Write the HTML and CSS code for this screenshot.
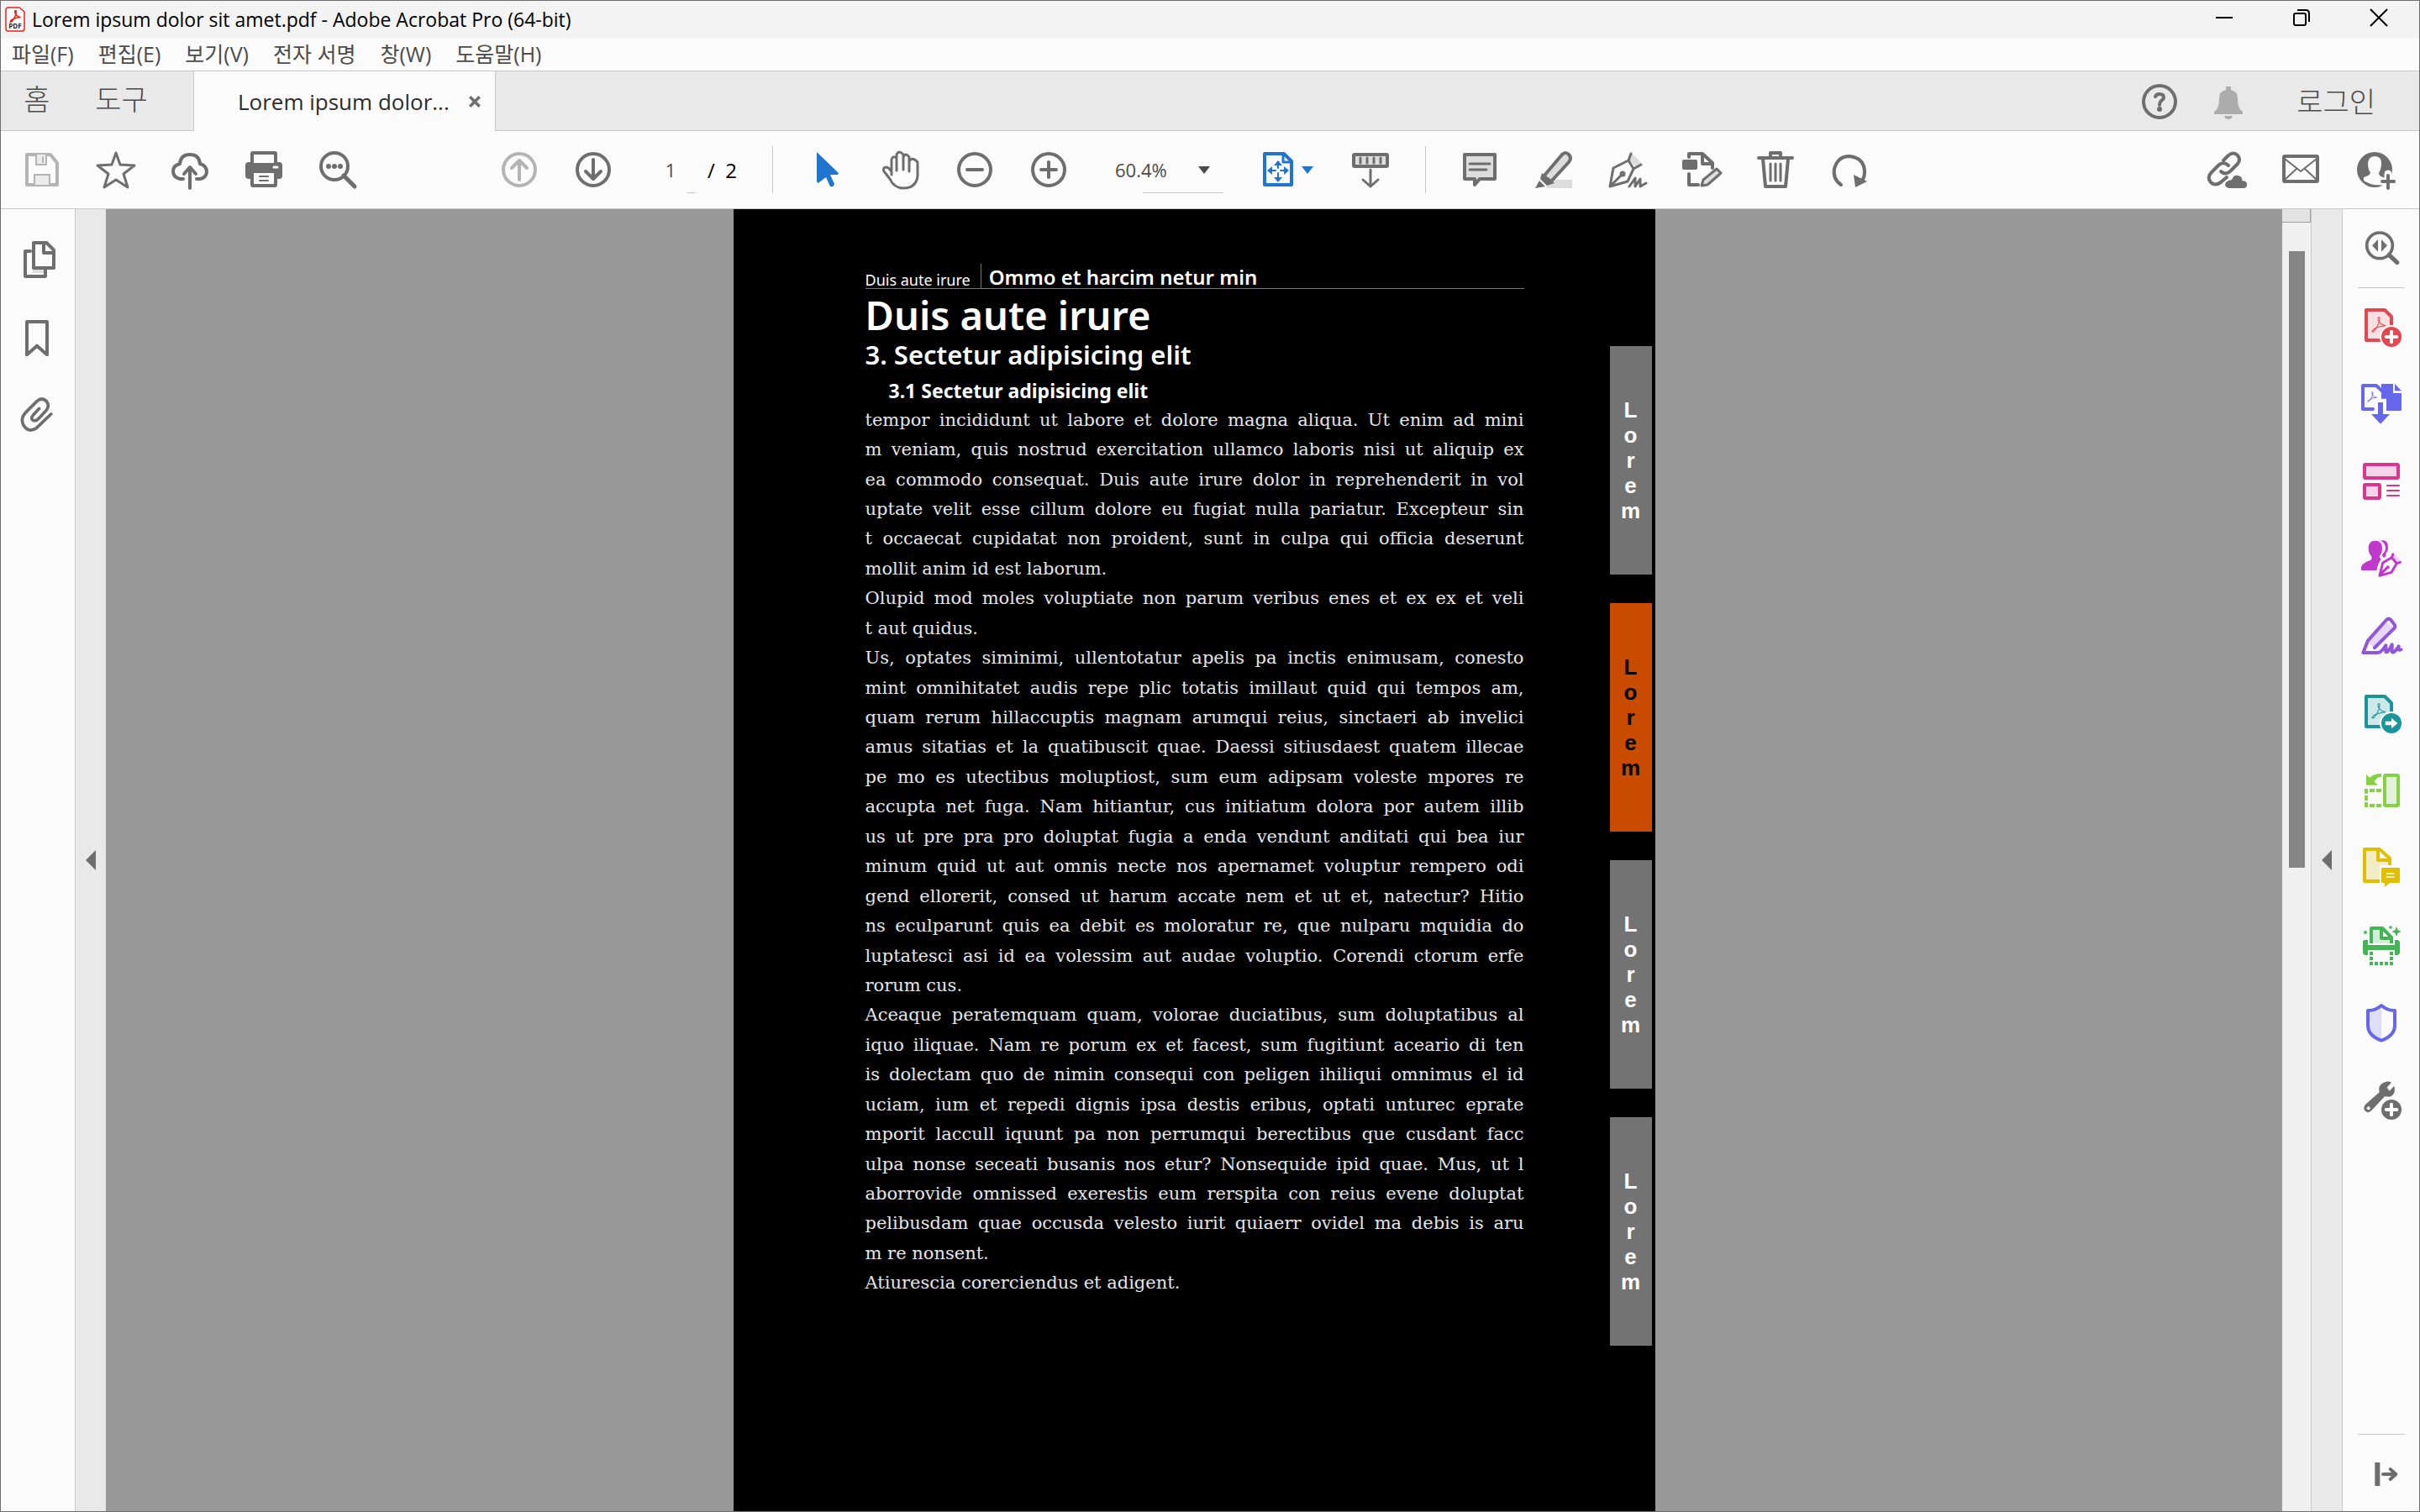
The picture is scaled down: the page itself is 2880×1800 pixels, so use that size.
FILE: index.html
```html
<!DOCTYPE html>
<html lang="ko">
<head>
    <meta charset="UTF-8">
    <meta name="viewport" content="width=device-width, initial-scale=1.0">
    <title>Lorem ipsum dolor sit amet.pdf - Adobe Acrobat Pro (64-bit)</title>
    <link rel="stylesheet" href="styles.css">
</head>
<body>
    <!-- shared shapes -->
    <svg class="defs" aria-hidden="true">
        <symbol id="acrobat" viewBox="0 0 52 56">
            <path d="M3 51C5 42 28 33 49 32C34 31 22 16 23 6C24 1 29 1 29 7C29 23 17 44 9 51C5 54 2 54 3 51Z"/>
        </symbol>
    </svg>

    <header class="titlebar">
        <svg class="app-icon" viewBox="0 0 24 30">
            <path d="M3 1H17L23 6V26Q23 29 20 29H4Q1 29 1 26V4Q1 1 4 1Z" fill="#fff" stroke="#e8231a" stroke-width="1.5"/>
            <svg x="5" y="4" width="15" height="15" fill="none" stroke="#e8231a" stroke-width="6"><use href="#acrobat"/></svg>
            <text x="12" y="26" text-anchor="middle">PDF</text>
        </svg>
        <h1 class="window-title">Lorem ipsum dolor sit amet.pdf - Adobe Acrobat Pro (64-bit)</h1>
        <div class="window-controls">
            <button aria-label="최소화"><svg viewBox="0 0 20 20"><path d="M0 10H20"/></svg></button>
            <button aria-label="이전 크기로"><svg viewBox="0 0 20 20"><rect x="1" y="5" width="14" height="14" rx="2"/><path d="M5 1H15Q19 1 19 5V15"/></svg></button>
            <button aria-label="닫기"><svg viewBox="0 0 20 20"><path d="M0 0L20 20M20 0L0 20"/></svg></button>
        </div>
    </header>

    <nav class="menubar">
        <button>파일(F)</button>
        <button>편집(E)</button>
        <button>보기(V)</button>
        <button>전자 서명</button>
        <button>창(W)</button>
        <button>도움말(H)</button>
    </nav>

    <div class="tabbar">
        <button class="home-tab">홈</button>
        <button class="tools-tab">도구</button>
        <div class="doc-tab">
            <span>Lorem ipsum dolor...</span>
            <button aria-label="탭 닫기"><svg viewBox="0 0 14 14"><path d="M2 2L12 12M12 2L2 12"/></svg></button>
        </div>
        <div class="account">
            <button aria-label="도움말"><svg class="icon" viewBox="0 0 48 48"><circle cx="24" cy="24" r="19"/><path d="M19 18Q20 15 24 15Q29 15 29 19Q29 21 26 23Q24 25 24 28"/><circle class="fill" cx="24" cy="33" r="3"/></svg></button>
            <button aria-label="알림"><svg class="icon bell" viewBox="0 0 48 48"><path class="fill" d="M21 6H27V10Q35 12 35 20Q35 33 41 36V39H7V36Q13 33 13 20Q13 12 21 10ZM19 41H29Q28 45 24 45Q20 45 19 41Z"/></svg></button>
            <button class="login">로그인</button>
        </div>
    </div>

    <div class="toolbar">
        <div class="tool-group">
            <button aria-label="저장" disabled><svg class="icon" viewBox="0 0 48 48"><path d="M6 6H34L42 16V42H6Z"/><path d="M17 6V18H29V6M15 42V30H33V42" fill="#ececec" stroke-width="2"/><path d="M25 9V15" stroke-width="2"/></svg></button>
            <button aria-label="즐겨찾기"><svg class="icon" viewBox="0 0 48 48"><path d="M24 4L29 18L46 19L33 29L38 45L24 36L10 45L15 29L2 19L19 18Z" stroke-width="3"/></svg></button>
            <button aria-label="클라우드에 업로드"><svg class="icon" viewBox="0 0 48 48"><path d="M16 35H12Q4 33 4 26Q4 19 12 17Q13 6 24 6Q35 6 36 17Q44 19 44 27Q43 34 36 35H32M24 46V22M17 29L24 21L31 29"/></svg></button>
            <button aria-label="인쇄"><svg class="icon" viewBox="0 0 48 48"><rect class="fill" x="2" y="15" width="44" height="20" rx="4"/><rect x="10" y="4" width="28" height="14" rx="1" fill="#fbfbfb"/><rect x="10" y="26" width="28" height="17" rx="1" fill="#fbfbfb"/><path d="M19 32H29M19 37H29" stroke-width="2"/><path d="M36 21H40" stroke="#fbfbfb" stroke-width="3"/></svg></button>
            <button aria-label="찾기"><svg class="icon" viewBox="0 0 48 48"><circle cx="20" cy="20" r="16"/><path d="M31 31L44 44" stroke-width="5"/><circle class="fill" cx="13" cy="20" r="3"/><circle class="fill" cx="20" cy="20" r="3"/><circle class="fill" cx="27" cy="20" r="3"/></svg></button>
        </div>
        <div class="tool-group page-group">
            <button aria-label="이전 페이지" disabled><svg class="icon" viewBox="0 0 48 48"><circle cx="24" cy="24" r="19"/><path d="M24 36V14M15 22L24 13L33 22"/></svg></button>
            <button aria-label="다음 페이지"><svg class="icon" viewBox="0 0 48 48"><circle cx="24" cy="24" r="19"/><path d="M24 12V34M15 26L24 35L33 26"/></svg></button>
            <label class="page-number"><input type="text" value="1" aria-label="페이지"><span>/&nbsp; 2</span></label>
        </div>
        <div class="tool-group view-group">
            <button aria-label="선택"><svg class="icon blue" viewBox="0 0 48 48"><path class="fill" d="M12 3L38 28L37 30H28L33 41Q32 45 28 44L23 33L15 39Q12 41 12 37Z"/></svg></button>
            <button aria-label="손 도구"><svg class="icon" viewBox="0 0 48 48"><path d="M13 30V12Q14 7 19 10V25V6Q22 0 27 6V24V9Q30 3 34 9V26V14Q38 8 44 15V32Q42 46 27 46Q16 46 11 35L4 26Q2 21 7 21Q11 22 13 27" stroke-width="3"/></svg></button>
            <button aria-label="축소"><svg class="icon" viewBox="0 0 48 48"><circle cx="24" cy="24" r="19"/><path d="M15 24H33"/></svg></button>
            <button aria-label="확대"><svg class="icon" viewBox="0 0 48 48"><circle cx="24" cy="24" r="19"/><path d="M15 24H33M24 15V33"/></svg></button>
        </div>
        <label class="zoom-level">
            <select aria-label="확대/축소"><option>60.4%</option></select>
            <svg class="caret" viewBox="0 0 14 9"><path d="M0 0H14L7 9Z"/></svg>
        </label>
        <button class="fit-page" aria-label="페이지 맞춤">
            <svg class="icon blue" viewBox="0 0 48 48"><path d="M8 5H31L40 14V42H8Z"/><path d="M30 5V15H40" stroke-width="3"/><path d="M24 15V22M24 28V36M13 25H21M27 25H35" stroke-width="2"/><path class="fill" d="M24 13L19 19H29ZM24 39L19 33H29ZM11 25L17 20V30ZM37 25L31 20V30Z"/></svg>
            <svg class="caret blue" viewBox="0 0 14 9"><path d="M0 0H14L7 9Z"/></svg>
        </button>
        <div class="tool-group read-group">
            <button aria-label="스크롤"><svg class="icon" viewBox="0 0 48 48"><rect x="4" y="6" width="40" height="14" rx="1" fill="#ddd"/><path d="M12 10V16M20 10V16M28 10V16M36 10V16M24 24V44M15 36L24 44L33 36" stroke-width="3"/></svg></button>
        </div>
        <div class="tool-group comment-group">
            <button aria-label="주석"><svg class="icon" viewBox="0 0 48 48"><path d="M6 6H42V35H24L18 42V35H6Z" fill="#ddd"/><path d="M12 17H36M12 24H32" stroke-width="3"/></svg></button>
            <button aria-label="강조"><svg class="icon" viewBox="0 0 48 48"><path d="M15 46L22 36H46V46Z" fill="#ddd" stroke="none"/><path d="M12 32L34 6Q38 2 42 6Q46 10 42 15L21 38Z" fill="#ddd"/><path class="fill" d="M10 28L25 40L16 43L8 35ZM7 37L14 44L2 46Z"/></svg></button>
            <button aria-label="서명"><svg class="icon" viewBox="0 0 48 48"><path d="M30 5L41 17L35 22L26 12Z" fill="#ddd" stroke="none"/><path d="M28 5L25 13L7 22L3 44L24 38L31 23L25 13M31 23L40 18M4 43L17 30" stroke-width="3"/><circle cx="18" cy="29" r="2" stroke-width="3"/><path d="M26 44L33 34V44L39 35V44L46 40" stroke-width="3"/></svg></button>
            <button aria-label="편집"><svg class="icon" viewBox="0 0 48 48"><rect class="fill" x="1" y="12" width="18" height="12" rx="2"/><path d="M9 9V5H25L37 16V22M25 5V17H37M9 29V42H20"/><path d="M24 43L26 36L42 23L47 28L31 42Z" fill="#ddd" stroke-width="3"/></svg></button>
            <button aria-label="삭제"><svg class="icon" viewBox="0 0 48 48"><path d="M4 10H44M18 10V4H30V10M9 11L12 44H36L39 11"/><path d="M18 17V37M24 17V37M30 17V37" stroke-width="3"/></svg></button>
            <button aria-label="회전"><svg class="icon" viewBox="0 0 48 48"><path d="M14 42Q4 35 6 23Q10 8 24 8Q42 10 42 27Q42 33 39 37"/><path class="fill" d="M29 30L45 38L31 45Z"/></svg></button>
        </div>
        <div class="tool-group share-group">
            <button aria-label="링크 공유"><svg class="icon" viewBox="0 0 48 48"><path d="M20 13L26 7Q32 2 37 7Q41 12 37 17L28 26Q22 31 17 26M24 33L17 39Q10 44 5 39Q0 33 6 27L15 18Q21 14 26 19"/><path class="fill" d="M26 46Q20 44 23 39Q27 36 30 36Q33 28 40 32Q43 34 42 37Q49 37 48 43Q47 46 45 46Z"/></svg></button>
            <button aria-label="이메일"><svg class="icon" viewBox="0 0 48 48"><rect x="4" y="8" width="40" height="30" rx="1"/><path d="M5 11L24 26L43 11M5 36L19 23M43 36L29 23" stroke-width="2"/></svg></button>
            <button aria-label="사용자 추가"><svg class="icon" viewBox="0 0 48 48"><circle class="fill" cx="24" cy="24" r="21"/><path d="M24 8Q33 8 32 19Q31 25 29 28Q29 32 34 33L33 41Q24 45 11 37V33Q18 31 19 28Q16 23 16 18Q16 8 24 8Z" fill="#fbfbfb" stroke="none"/><path d="M40 29V47M31 38H49" stroke="#fbfbfb" stroke-width="9"/><path d="M40 31V46M33 38H47"/></svg></button>
        </div>
    </div>

    <main class="workspace">
        <aside class="left-rail">
            <button aria-label="페이지 축소판"><svg class="icon" viewBox="0 0 144 144"><path d="M57 102H102V120H57Z" fill="#ddd" stroke="none"/><path d="M48 42H30V132H102V102" stroke-width="12"/><path d="M60 12H106L132 38V102H60ZM96 12V48H132" stroke-width="12"/></svg></button>
            <button aria-label="책갈피"><svg class="icon" viewBox="0 0 144 144"><path d="M36 18H108V136L72 104L36 136Z" stroke-width="12"/></svg></button>
            <button aria-label="첨부 파일"><svg class="icon" viewBox="0 0 144 144"><path d="M80 52L58 76Q48 88 58 94Q66 98 76 90L106 58Q118 42 106 26Q90 10 72 26L30 68Q12 88 24 112Q42 140 70 122L122 72" stroke-width="11"/></svg></button>
        </aside>
        <button class="gutter left-gutter" aria-label="탐색 창"><svg viewBox="0 0 12 24"><path d="M12 0V24L0 12Z"/></svg></button>

        <div class="canvas">
            <article class="page">
                <div class="page-content">
                    <div class="running-head"><span>Duis aute irure</span><strong>Ommo et harcim netur min</strong></div>
                    <h2>Duis aute irure</h2>
                    <h3>3. Sectetur adipisicing elit</h3>
                    <h4>3.1 Sectetur adipisicing elit</h4>
                    <div class="lines">
                        <p>tempor incididunt ut labore et dolore magna aliqua. Ut enim ad mini</p>
                        <p>m veniam, quis nostrud exercitation ullamco laboris nisi ut aliquip ex</p>
                        <p>ea commodo consequat. Duis aute irure dolor in reprehenderit in vol</p>
                        <p>uptate velit esse cillum dolore eu fugiat nulla pariatur. Excepteur sin</p>
                        <p>t occaecat cupidatat non proident, sunt in culpa qui officia deserunt</p>
                        <p class="last">mollit anim id est laborum.</p>
                        <p>Olupid mod moles voluptiate non parum veribus enes et ex ex et veli</p>
                        <p class="last">t aut quidus.</p>
                        <p>Us, optates siminimi, ullentotatur apelis pa inctis enimusam, conesto</p>
                        <p>mint omnihitatet audis repe plic totatis imillaut quid qui tempos am,</p>
                        <p>quam rerum hillaccuptis magnam arumqui reius, sinctaeri ab invelici</p>
                        <p>amus sitatias et la quatibuscit quae. Daessi sitiusdaest quatem illecae</p>
                        <p>pe mo es utectibus moluptiost, sum eum adipsam voleste mpores re</p>
                        <p>accupta net fuga. Nam hitiantur, cus initiatum dolora por autem illib</p>
                        <p>us ut pre pra pro doluptat fugia a enda vendunt anditati qui bea iur</p>
                        <p>minum quid ut aut omnis necte nos apernamet voluptur rempero odi</p>
                        <p>gend ellorerit, consed ut harum accate nem et ut et, natectur? Hitio</p>
                        <p>ns eculparunt quis ea debit es moloratur re, que nulparu mquidia do</p>
                        <p>luptatesci asi id ea volessim aut audae voluptio. Corendi ctorum erfe</p>
                        <p class="last">rorum cus.</p>
                        <p>Aceaque peratemquam quam, volorae duciatibus, sum doluptatibus al</p>
                        <p>iquo iliquae. Nam re porum ex et facest, sum fugitiunt aceario di ten</p>
                        <p>is dolectam quo de nimin consequi con peligen ihiliqui omnimus el id</p>
                        <p>uciam, ium et repedi dignis ipsa destis eribus, optati unturec eprate</p>
                        <p>mporit laccull iquunt pa non perrumqui berectibus que cusdant facc</p>
                        <p>ulpa nonse seceati busanis nos etur? Nonsequide ipid quae. Mus, ut l</p>
                        <p>aborrovide omnissed exerestis eum rerspita con reius evene doluptat</p>
                        <p>pelibusdam quae occusda velesto iurit quiaerr ovidel ma debis is aru</p>
                        <p class="last">m re nonsent.</p>
                        <p class="last">Atiurescia corerciendus et adigent.</p>
                    </div>
                </div>
                <div class="index-tabs">
                    <div class="index-tab"><span>L</span><span>o</span><span>r</span><span>e</span><span>m</span></div>
                    <div class="index-tab current"><span>L</span><span>o</span><span>r</span><span>e</span><span>m</span></div>
                    <div class="index-tab"><span>L</span><span>o</span><span>r</span><span>e</span><span>m</span></div>
                    <div class="index-tab"><span>L</span><span>o</span><span>r</span><span>e</span><span>m</span></div>
                </div>
            </article>
        </div>

        <div class="scrollbar">
            <div class="scroll-button"></div>
            <div class="scroll-thumb"></div>
        </div>
        <button class="gutter right-gutter" aria-label="도구 창"><svg viewBox="0 0 12 24"><path d="M12 0V24L0 12Z"/></svg></button>

        <aside class="right-rail">
            <button class="search-tool" aria-label="도구 검색"><svg class="icon" viewBox="0 0 144 144"><circle cx="66" cy="58" r="46" stroke-width="11"/><path d="M100 92L128 118" stroke-width="16"/><path class="fill" d="M60 36V80L39 58ZM72 36V80L93 58Z"/></svg></button>
            <div class="tool-list">
                <button aria-label="PDF 만들기"><svg class="icon red" viewBox="0 0 144 144"><path d="M18 9H84L108 33V117H18Z" fill="#f8dfe1" stroke-width="12"/><svg x="36" y="32" width="54" height="58" stroke-width="3"><use href="#acrobat"/></svg><circle cx="108" cy="105" r="42" fill="#fbfbfb" stroke="none"/><circle class="fill" cx="108" cy="105" r="36"/><path d="M108 86V124M89 105H127" stroke="#fff" stroke-width="12"/></svg></button>
                <button aria-label="PDF 내보내기"><svg class="icon indigo" viewBox="0 0 144 144"><path d="M42 87H6V3H54L74 22" stroke-width="12"/><path class="fill" d="M72 -3H114V30H144V90Q144 93 140 93H90V50H72ZM120 -3L144 22H120Z"/><svg x="19" y="24" width="42" height="38" stroke-width="4"><use href="#acrobat"/></svg><path class="fill" d="M60 63H78V105H102L72 137Q69 141 66 137L36 105H60Z"/></svg></button>
                <button aria-label="PDF 편집"><svg class="icon pink" viewBox="0 0 144 144"><g stroke-width="12" fill="#f5d3e8"><rect x="12" y="9" width="120" height="48" rx="3"/><rect x="12" y="81" width="54" height="48" rx="3"/></g><path d="M93 84H135M93 102H135M93 120H135" stroke-width="6"/></svg></button>
                <button aria-label="서명 요청"><svg class="icon purple" viewBox="0 0 144 144"><path class="fill" d="M50 5Q75 5 75 32Q75 50 65 60Q66 68 71 72Q61 83 55 111H0V100Q1 86 34 74Q39 70 37 61Q26 50 26 32Q26 5 50 5ZM69 5Q96 -1 96 29Q96 43 88 50Q90 66 80 64Q73 60 76 53Q87 42 87 29Q85 12 69 5Z"/><path d="M114 46L140 76L126 80L108 62Z" fill="#f0d0f4" stroke="none"/><path d="M113 54L109 65L77 84L66 130L108 118L127 86L109 65M127 86L139 82M66 128L94 100" stroke-width="9"/><circle class="fill" cx="95" cy="100" r="6"/></svg></button>
                <button aria-label="작성 및 서명"><svg class="icon violet" viewBox="0 0 144 144"><path d="M24 90L90 17L120 44L50 116Z" fill="#e6d9f6" stroke="none"/><path d="M48 111L119 41Q123 34 118 28L106 12Q98 4 90 12L24 86L7 129H60Q73 128 88 103V126Q94 132 110 100V126Q116 134 134 106Q130 124 142 118" stroke-width="12"/></svg></button>
                <button aria-label="공유"><svg class="icon teal" viewBox="0 0 144 144"><path d="M18 9H84L108 33V117H18Z" fill="#cfe7e8" stroke-width="12"/><svg x="36" y="32" width="54" height="58" stroke-width="3"><use href="#acrobat"/></svg><circle cx="108" cy="105" r="42" fill="#fbfbfb" stroke="none"/><circle class="fill" cx="108" cy="105" r="36"/><path d="M86 98H108V86L130 105L108 124V112H86Z" fill="#fff" stroke="none"/></svg></button>
                <button aria-label="페이지 구성"><svg class="icon green" viewBox="0 0 144 144"><rect x="84" y="15" width="48" height="108" rx="3" fill="#e4f1da" stroke-width="12"/><path class="fill" d="M18 11L30 24Q45 9 72 9V21Q54 21 47 38L60 50H18Z"/><path d="M12 69H24M30 69H48M54 69H72M12 123H24M30 123H48M54 123H72M18 63V80M18 87V105M18 111V129" stroke-width="12" stroke-linecap="butt"/></svg></button>
                <button aria-label="주석"><svg class="icon yellow" viewBox="0 0 144 144"><path d="M12 3H66L102 36V117H12ZM60 3V42H102" fill="#f3edc6" stroke-width="12"/><path d="M66 60H144V138H66Z" fill="#fbfbfb" stroke="none"/><path class="fill" d="M76 69H134Q138 69 138 73V119Q138 123 134 123H102L84 138V123H76Q72 123 72 119V73Q72 69 76 69Z"/><path d="M91 90H117M91 102H117" stroke="#fff" stroke-width="5"/></svg></button>
                <button aria-label="스캔 및 OCR"><svg class="icon emerald" viewBox="0 0 144 144"><path d="M36 63V9H76L108 42V63M72 9V45H106" fill="#d6ecd9" stroke-width="12" stroke-linecap="butt"/><path class="fill" d="M10 51H24V69H120V51H132L138 57V98L132 105H120V87H24V105H12L6 98V57Z"/><path d="M30 99H42M30 117H42M102 99H114M102 117H114M30 135H114" stroke-width="12" stroke-dasharray="12 6" stroke-linecap="butt"/><path class="fill" d="M126 3L131 16L143 21L131 26L126 39L121 26L109 21L121 16ZM105 -2L108 4L114 6L108 8L105 14L102 8L96 6L102 4ZM15 15L18 21L24 24L18 27L15 33L12 27L6 24L12 21Z"/></svg></button>
                <button aria-label="보호"><svg class="icon indigo" viewBox="0 0 144 144"><path d="M72 12V132Q24 116 24 80V26Q54 26 72 12Z" fill="#dedef9" stroke="none"/><path d="M72 9Q94 28 120 27V80Q120 116 72 134Q24 116 24 80V27Q50 28 72 9Z" stroke-width="12"/></svg></button>
                <button aria-label="도구 더 보기"><svg class="icon" viewBox="0 0 144 144"><path class="fill" d="M108 8L92 26L101 38L118 20Q126 50 102 59L84 58L34 111Q18 120 11 105Q7 94 18 84L65 43Q58 12 90 5Q102 4 108 8Z"/><circle cx="26" cy="100" r="6" fill="#fbfbfb" stroke="none"/><circle cx="108" cy="105" r="42" fill="#fbfbfb" stroke="none"/><circle class="fill" cx="108" cy="105" r="36"/><path d="M108 86V124M89 105H127" stroke="#fff" stroke-width="12"/></svg></button>
            </div>
            <button class="collapse-tool" aria-label="도구 창 접기"><svg class="icon" viewBox="0 0 144 144"><path d="M58 33V117" stroke-width="18" stroke-linecap="butt"/><path d="M78 75H122M104 57L124 75L104 93" stroke-width="12"/></svg></button>
        </aside>
    </main>
</body>
</html>
```
FILE: styles.css
```css
* {
    box-sizing: border-box;
}
body {
    margin: 0;
    height: 100vh;
    display: flex;
    flex-direction: column;
    overflow: hidden;
    border: 1px solid #6e6e6e;
    background: #fbfbfb;
    color: #4b4b4b;
    font-family: "Open Sans", "Noto Sans CJK KR", sans-serif;
}
button, input, select {
    font: inherit;
    color: inherit;
    background: none;
    border: 0;
    padding: 0;
    margin: 0;
}
button {
    display: flex;
    align-items: center;
    justify-content: center;
}
h1, h2, h3, h4, p {
    margin: 0;
}
.defs {
    display: none;
}

/* icons */
.icon {
    width: 48px;
    height: 48px;
    flex: none;
    overflow: visible;
    color: #6e6e6e;
    fill: none;
    stroke: currentColor;
    stroke-width: 4;
    stroke-linecap: round;
    stroke-linejoin: round;
}
.icon .fill {
    fill: currentColor;
    stroke: none;
}
button:disabled .icon {
    color: #b4b4b4;
}
.icon.bell { color: #acacac; }
.icon.blue, .caret.blue { color: #2076cf; }
.icon.red { color: #e34850; }
.icon.indigo { color: #6767ec; }
.icon.pink { color: #d83790; }
.icon.purple { color: #c038cc; }
.icon.violet { color: #9256d9; }
.icon.teal { color: #1b959a; }
.icon.green { color: #85d044; }
.icon.yellow { color: #dfbf00; }
.icon.emerald { color: #44b556; }
.caret {
    width: 14px;
    height: 9px;
    fill: currentColor;
}

/* title bar */
.titlebar {
    display: flex;
    align-items: center;
    height: 44px;
    padding-left: 5px;
    background: #f3f3f3;
}
.app-icon {
    width: 24px;
    height: 30px;
}
.app-icon text {
    font-size: 8px;
    font-weight: 700;
    fill: #222;
}
.window-title {
    flex: 1;
    padding-left: 8px;
    font-size: 23px;
    font-weight: 400;
    color: #000;
}
.window-controls {
    display: flex;
    height: 40px;
    align-self: flex-start;
    padding-right: 2px;
}
.window-controls button {
    width: 92px;
}
.window-controls svg {
    width: 20px;
    height: 20px;
    overflow: visible;
    fill: none;
    stroke: #000;
    stroke-width: 2;
}

/* menu bar */
.menubar {
    display: flex;
    gap: 29px;
    height: 39px;
    padding: 0 0 2px 13px;
    font-size: 25px;
    line-height: 36px;
}

/* tab bar */
.tabbar {
    display: flex;
    height: 72px;
    border-top: 1px solid #c8c8c8;
    background: linear-gradient(#c8c8c8, #c8c8c8) bottom / 100% 1px no-repeat #e9e9e9;
    font-size: 34px;
    line-height: 66px;
}
.home-tab, .tools-tab {
    align-items: flex-start;
    font-weight: 300;
}
.home-tab {
    width: 86px;
}
.tools-tab {
    width: 143px;
    padding-right: 28px;
}
.doc-tab {
    display: flex;
    align-items: center;
    justify-content: space-between;
    width: 360px;
    padding: 0 16px 0 52px;
    border: solid #c8c8c8;
    border-width: 0 1px;
    background: #fbfbfb;
    color: #2c2c2c;
    font-size: 26px;
}
.doc-tab svg {
    width: 16px;
    height: 16px;
    stroke: #6e6e6e;
    stroke-width: 3;
}
.account {
    display: flex;
    margin-left: auto;
    padding-right: 52px;
}
.account button {
    width: 82px;
}
.account .login {
    width: auto;
    padding-left: 40px;
    font-weight: 300;
}

/* toolbar */
.toolbar {
    display: flex;
    height: 93px;
    padding: 0 9px 0 5px;
    border-bottom: 1px solid #c8c8c8;
}
.tool-group {
    display: flex;
}
.tool-group button {
    width: 88px;
}
.page-group {
    margin-left: 128px;
    padding-right: 8px;
}
.page-number {
    display: flex;
    align-items: center;
    width: 161px;
    font-size: 24px;
    color: #000;
    background: linear-gradient(#c8c8c8, #c8c8c8) 68px 73px / 10px 1px no-repeat;
}
.page-number input {
    width: 88px;
    padding-left: 8px;
    text-align: center;
    color: #4b4b4b;
    font-size: 22px;
}
.page-number span {
    padding-left: 4px;
}
.view-group, .comment-group {
    padding-left: 21px;
    background: linear-gradient(#c8c8c8, #c8c8c8) 0 18px / 1px 56px no-repeat;
}
.zoom-level {
    display: flex;
    align-items: center;
    width: 182px;
    padding: 0 34px 0 35px;
    background: linear-gradient(#c8c8c8, #c8c8c8) 68px 73px / 96px 1px no-repeat;
    font-size: 22px;
}
.zoom-level select {
    flex: 1;
    appearance: none;
}
.fit-page {
    width: 112px;
    gap: 4px;
}
.read-group {
    padding-left: 1px;
    padding-right: 21px;
}
.share-group {
    margin-left: auto;
}

/* workspace */
.workspace {
    display: flex;
    flex: 1;
    min-height: 0;
}
.left-rail {
    width: 89px;
    padding-top: 14px;
    border-right: 1px solid #c8c8c8;
}
.left-rail button {
    width: 86px;
    height: 92px;
}
.gutter {
    width: 36px;
    background: #e9e9e9;
}
.gutter svg {
    width: 12px;
    height: 24px;
    fill: #6e6e6e;
}
.right-gutter {
    width: 37px;
    border-right: 1px solid #c8c8c8;
}
.canvas {
    flex: 1;
    display: flex;
    justify-content: center;
    background: #999;
}

/* document page */
.page {
    display: flex;
    justify-content: space-between;
    width: 1097px;
    padding: 65px 4px 0 157px;
    background: #000;
    color: #fff;
    font-family: "Noto Sans", sans-serif;
}
.page-content {
    width: 784px;
}
.running-head {
    display: flex;
    align-items: flex-end;
    height: 30px;
    border-bottom: 1px solid #777;
    font-size: 18px;
    line-height: 20px;
}
.running-head span {
    padding-right: 12px;
}
.running-head strong {
    padding: 3px 0 0 9px;
    border-left: 1px solid #777;
    font-size: 24px;
    font-weight: 600;
    line-height: 26px;
}
.page h2 {
    padding-top: 2px;
    font-size: 47px;
    font-weight: 600;
    line-height: 58px;
}
.page h3 {
    font-size: 31px;
    font-weight: 600;
    line-height: 36px;
}
.page h4 {
    padding: 8px 0 0 28px;
    font-size: 23px;
    font-weight: 700;
    line-height: 34px;
}
.lines {
    display: grid;
    grid-auto-rows: 1fr;
    align-items: center;
    min-height: 1063px;
    color: #e6e6e6;
    font-family: "DejaVu Serif", serif;
    font-size: 21px;
    line-height: 32px;
    white-space: nowrap;
}
.lines p {
    text-align: justify;
    text-align-last: justify;
}
.lines .last {
    text-align-last: left;
}
.index-tabs {
    display: flex;
    flex-direction: column;
    gap: 34px;
    padding-top: 98px;
}
.index-tab {
    display: flex;
    flex-direction: column;
    align-items: center;
    justify-content: center;
    width: 50px;
    height: 272px;
    background: #737373;
    font-family: "Liberation Sans", sans-serif;
    font-size: 26px;
    font-weight: 700;
    line-height: 30px;
}
.index-tab.current {
    background: #c84b00;
    color: #000;
}

/* scrollbar */
.scrollbar {
    width: 35px;
    border: solid #c8c8c8;
    border-width: 0 1px 0 0;
    background: #f0f0f0;
}
.scroll-button {
    height: 16px;
    border: solid #a0a0a0;
    border-width: 0 1px 1px 0;
    background: #e3e3e3;
}
.scroll-thumb {
    width: 19px;
    height: 734px;
    margin: 34px 0 0 8px;
    background: #858585;
}

/* tools pane */
.right-rail {
    display: flex;
    flex-direction: column;
    width: 91px;
}
.right-rail button {
    width: 100%;
    height: 92px;
    padding-top: 2px;
}
.right-rail .search-tool {
    height: 94px;
    background: linear-gradient(#c8c8c8, #c8c8c8) center bottom / 56px 1px no-repeat;
}
.right-rail .collapse-tool {
    margin-top: auto;
    background: linear-gradient(#c8c8c8, #c8c8c8) center top / 56px 1px no-repeat;
}
```
